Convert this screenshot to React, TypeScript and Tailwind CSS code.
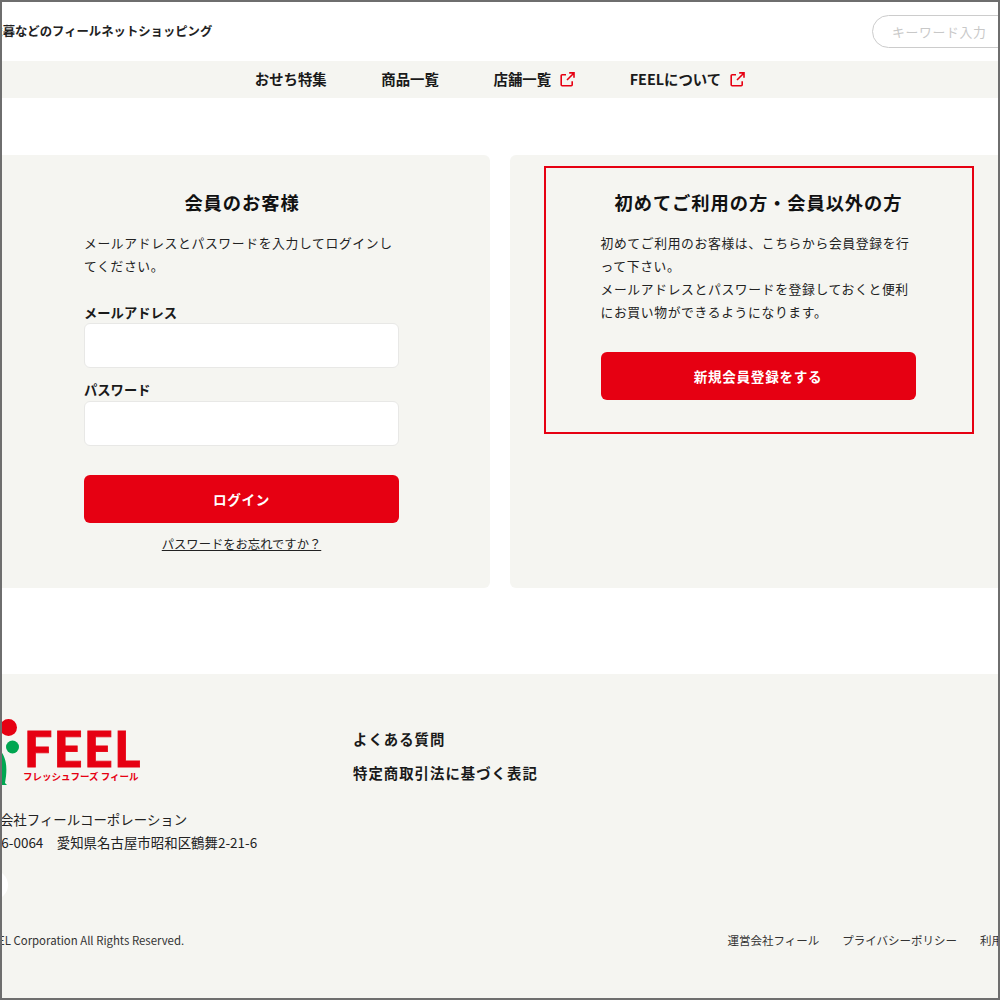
const jp = "font-['Noto_Sans_CJK_JP','Noto_Sans',sans-serif]";

function Ext() {
  return (
    <svg width="15" height="15" viewBox="0 0 15 15" fill="none" stroke="#e60012" strokeWidth="1.6" className="shrink-0">
      <path d="M6 2.700H2.200a1 1 0 0 0-1 1v9a1 1 0 0 0 1 1h9a1 1 0 0 0 1-1V9.200" />
      <path d="M9.200 0.900H14V5.700M14 1L7 8" />
    </svg>
  );
}

function NavItem({ label, ext }: { label: string; ext?: boolean }) {
  return (
    <a className="flex items-center gap-[9px] text-[14.4px] font-bold text-[#1a1a1a]">
      <span className="pb-[2px]">{label}</span>
      {ext && <Ext />}
    </a>
  );
}

function Field({ label, className, labelClass }: { label: string; className?: string; labelClass?: string }) {
  return (
    <div className={className}>
      <label className={`block text-[13.3px] font-bold leading-[20px] text-[#1a1a1a] ${labelClass ?? ""}`}>{label}</label>
      <input className="block h-[45px] w-[315px] rounded-[6px] border border-[#e8e8e6] bg-white" />
    </div>
  );
}

export default function App() {
  return (
    <div className={`h-[1000px] w-[1000px] overflow-hidden border-2 border-[#6e6e6e] bg-white text-[#222] ${jp}`}>
      <header className="flex h-[59px] items-center justify-between">
        <p className="ml-[-24px] whitespace-nowrap text-[12.35px] font-bold">お歳暮などのフィールネットショッピング</p>
        <div className="mr-[-60px] flex h-[33px] w-[186px] items-center rounded-full border border-[#cccccc] pl-[19px] text-[12.8px] tracking-[0.055em] text-[#c8c8c8]">キーワード入力</div>
      </header>
      <nav className="flex h-[37px] items-center justify-center gap-[54.6px] bg-[#f5f5f1]">
        <NavItem label="おせち特集" />
        <NavItem label="商品一覧" />
        <NavItem label="店舗一覧" ext />
        <NavItem label="FEELについて" ext />
      </nav>
      <main className="ml-[-9px] mt-[57px] flex w-[1014px] gap-[20px]">
        <section className="h-[433px] w-[497px] shrink-0 rounded-[6px] bg-[#f5f5f1] pt-[33px]">
          <h2 className="ml-[1px] text-center text-[18.3px] font-bold leading-[28px] tracking-[0.05em] text-[#111]">会員のお客様</h2>
          <div className="mx-auto w-[315px]">
            <p className="mt-[16px] text-[12.8px] leading-[22.9px] tracking-[0.05em]">メールアドレスとパスワードを入力してログインしてください。</p>
            <Field label="メールアドレス" className="mt-[25.2px]" />
            <Field label="パスワード" className="mt-[12px]" labelClass="pb-[1px]" />
            <button className="mt-[29px] block h-[48px] w-[315px] rounded-[6px] bg-[#e60012] text-[13.6px] font-bold tracking-[0.05em] text-white">ログイン</button>
            <p className="mt-[11px] text-center text-[12.3px] leading-[20px] underline">パスワードをお忘れですか？</p>
          </div>
        </section>
        <section className="h-[433px] w-[497px] shrink-0 rounded-[6px] bg-[#f5f5f1] pl-[34px] pt-[11px]">
          <div className="h-[268px] w-[430px] border-2 border-[#e60012] pr-[2px] pt-[20px]">
            <h2 className="ml-[1px] text-center text-[18.3px] font-bold leading-[28px] tracking-[0.05em] text-[#111]">初めてご利用の方・会員以外の方</h2>
            <div className="mx-auto w-[315px]">
              <p className="mt-[16px] text-[12.8px] leading-[22.9px] tracking-[0.05em]">
                初めてご利用のお客様は、こちらから会員登録を行って下さい。
                <br />
                メールアドレスとパスワードを登録しておくと便利にお買い物ができるようになります。
              </p>
              <button className="mt-[28.400px] block h-[48px] w-[315px] rounded-[6px] bg-[#e60012] text-[13.6px] font-bold tracking-[0.05em] text-white">新規会員登録をする</button>
            </div>
          </div>
        </section>
      </main>
      <footer className="mt-[86px] h-[324px] bg-[#f5f5f1]">
        <div className="ml-[-29px] flex pt-[43px]">
          <div className="w-[380px] shrink-0">
            <div className="flex h-[70px] items-start">
              <svg width="51" height="70" viewBox="0 0 51 70" className="shrink-0">
                <circle cx="35.500" cy="10.500" r="8.500" fill="#e60012" />
                <circle cx="39.500" cy="30" r="6.500" fill="#00a651" />
                <path d="M27 33C33 40 35 50 32 66L34 68H27Z" fill="#00a651" />
              </svg>
              <div>
                <div className="mt-[10px] font-['Lato',sans-serif] text-[50px] font-black leading-[42px] tracking-[0.03em] text-[#e60012] [-webkit-text-stroke:0.8px_#e60012]">FEEL</div>
                <div className="ml-[-1px] whitespace-nowrap text-[9.5px] font-bold leading-[14px] text-[#e60012]">フレッシュフーズ フィール</div>
              </div>
            </div>
            <p className="mt-[21px] text-[13.45px] leading-[23px]">株式会社フィールコーポレーション</p>
            <p className="text-[13.45px] leading-[23px]">〒466-0064　愛知県名古屋市昭和区鶴舞2-21-6</p>
            <div className="ml-[5px] mt-[16px] h-[30px] w-[30px] rounded-full bg-white"></div>
          </div>
          <ul className="flex flex-col gap-[12px] pt-[10.5px] text-[14.4px] font-bold leading-[22px] tracking-[0.07em] text-[#1a1a1a]">
            <li>よくある質問</li>
            <li>特定商取引法に基づく表記</li>
          </ul>
        </div>
        <div className="ml-[-29px] mr-[-28px] mt-[32px] flex items-center justify-between text-[11.500px] leading-[16px] text-[#333]">
          <p className="text-[11.4px]">© FEEL Corporation All Rights Reserved.</p>
          <ul className="flex gap-[23px]">
            <li>運営会社フィール</li>
            <li>プライバシーポリシー</li>
            <li>利用規約</li>
          </ul>
        </div>
      </footer>
    </div>
  );
}
